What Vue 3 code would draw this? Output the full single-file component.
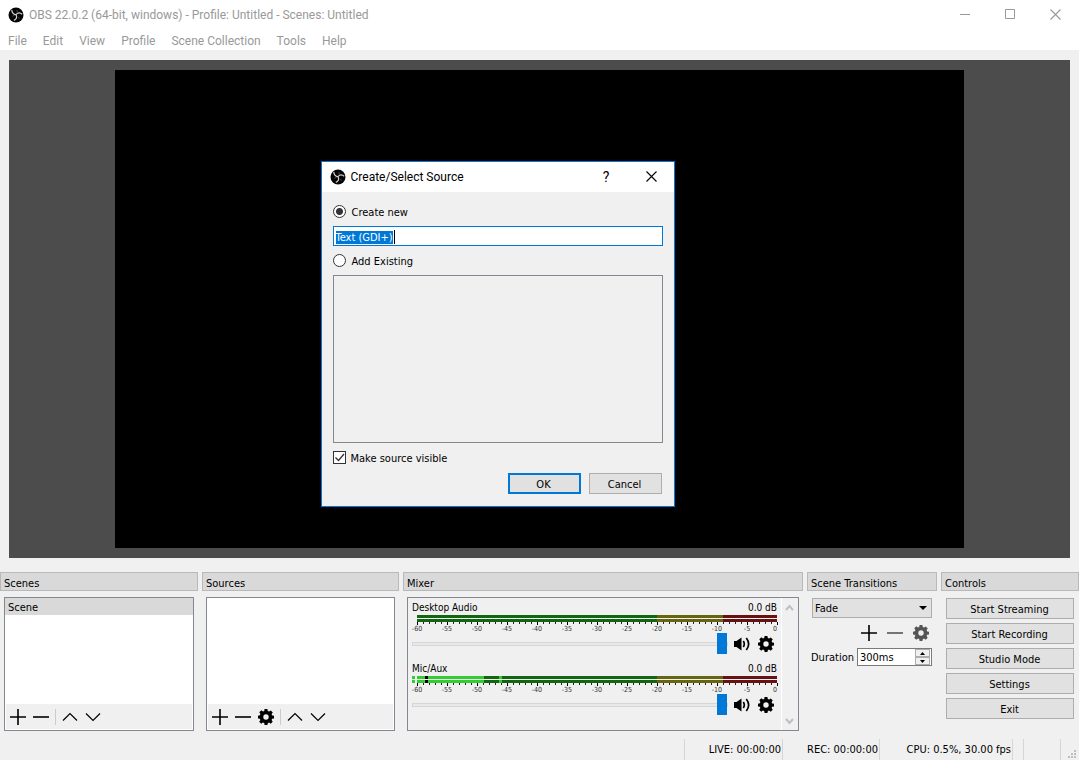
<script setup>
import { ref, onMounted } from 'vue'

const sourceName = ref('Text (GDI+)')
const mode = ref('new')
const visible = ref(true)
const duration = ref('300ms')
const nameBox = ref(null)

const menus = ['File', 'Edit', 'View', 'Profile', 'Scene Collection', 'Tools', 'Help']
const actions = ['Start Streaming', 'Start Recording', 'Studio Mode', 'Settings', 'Exit']
const channels = [
  { name: 'Desktop Audio', level: 0 },
  { name: 'Mic/Aux', level: 1 }
]
const ticks = Array.from({ length: 61 }, (_, i) => ({
  x: (i / 60) * 100 + '%',
  major: i % 5 === 0,
  label: String(i - 60)
}))
const gear = 'M6.600 0h2.800l.4 2 1.300.5 1.700-1.100 2 2-1.200 1.700.6 1.300 1.800.3v2.700l-1.900.4-.5 1.300 1.100 1.700-2 2-1.700-1.200-1.200.6-.4 1.800H6.600l-.4-1.900-1.300-.5-1.700 1.100-2-2 1.200-1.700-.6-1.200L0 9.400V6.700l1.900-.4.5-1.300-1.100-1.700 2-2L5 2.500 6.200 2zM8 5.300a2.700 2.700 0 1 0 0 5.400 2.700 2.700 0 0 0 0-5.400z'

onMounted(() => {
  nameBox.value.focus()
  nameBox.value.select()
})
</script>

<template>
  <div class="window">
    <svg class="defs" width="0" height="0" aria-hidden="true">
      <symbol id="obs" viewBox="0 0 16 16">
        <circle cx="8" cy="8" r="7.500" fill="#050505" />
        <path d="M3.800 2.900C3.900 5.600 5.600 7.200 8 7.600C9.800 5.600 12 5.400 14.200 7.300M8 7.600C9.300 10 8.600 12.300 5.800 13.400" fill="none" stroke="#d4d4d4" stroke-width="1.200" />
        <path d="M8.600 3.200C9.400 4 9.500 4.800 9.200 5.600M4.400 9.300C5 8.700 5.700 8.400 6.500 8.500M11.600 11.200C10.800 11.100 10 10.700 9.600 10" fill="none" stroke="#777" stroke-width=".7" />
      </symbol>
      <symbol id="gear" viewBox="0 0 16 16"><path :d="gear" fill="currentColor" fill-rule="evenodd" /></symbol>
      <symbol id="plus" viewBox="0 0 16 16"><path d="M0 8H16M8 0V16" stroke="currentColor" stroke-width="1.600" /></symbol>
      <symbol id="minus" viewBox="0 0 16 16"><path d="M0 8H16" stroke="currentColor" stroke-width="1.600" /></symbol>
      <symbol id="up" viewBox="0 0 16 16"><path d="M1 11.500L8 4.500L15 11.500" fill="none" stroke="currentColor" stroke-width="1.200" /></symbol>
      <symbol id="down" viewBox="0 0 16 16"><path d="M1 4.500L8 11.500L15 4.500" fill="none" stroke="currentColor" stroke-width="1.200" /></symbol>
      <symbol id="close" viewBox="0 0 11 11"><path d="M.5 .5L10.500 10.500M10.500 .5L.5 10.500" stroke="currentColor" stroke-width="1.100" /></symbol>
      <symbol id="speaker" viewBox="0 0 16 16">
        <path d="M0 5H2.500L7.500 1.500V14.500L2.500 11H0z" fill="currentColor" />
        <path d="M9.300 5Q11.300 8 9.300 11M12.300 2Q17 8 12.300 14" fill="none" stroke="currentColor" stroke-width="1.700" />
      </symbol>
    </svg>

    <header class="titlebar">
      <svg class="logo"><use href="#obs" /></svg>
      <h1>OBS 22.0.2 (64-bit, windows) - Profile: Untitled - Scenes: Untitled</h1>
      <button class="caption" aria-label="Minimize"><svg width="11" height="11"><path d="M0 5.500H10" stroke="currentColor" /></svg></button>
      <button class="caption" aria-label="Maximize"><svg width="11" height="11"><path d="M.5 .5H9.500V9.500H.5z" fill="none" stroke="currentColor" /></svg></button>
      <button class="caption" aria-label="Close"><svg width="11" height="11"><use href="#close" /></svg></button>
    </header>
    <nav class="menubar">
      <button v-for="m in menus" :key="m">{{ m }}</button>
    </nav>

    <main class="preview">
      <div class="canvas"></div>
      <form class="dialog" role="dialog" aria-labelledby="dialog-title" @submit.prevent>
        <div class="dialog-title">
          <svg class="logo"><use href="#obs" /></svg>
          <h2 id="dialog-title">Create/Select Source</h2>
          <button type="button" class="caption help" aria-label="Help">?</button>
          <button type="button" class="caption" aria-label="Close"><svg width="11" height="11"><use href="#close" /></svg></button>
        </div>
        <div class="dialog-body">
          <label class="choice"><input v-model="mode" type="radio" name="mode" value="new" /><span>Create new</span></label>
          <input ref="nameBox" v-model="sourceName" class="name" type="text" aria-label="Source name" />
          <label class="choice"><input v-model="mode" type="radio" name="mode" value="existing" /><span>Add Existing</span></label>
          <ul class="existing" aria-label="Existing sources"></ul>
          <label class="choice check"><input v-model="visible" type="checkbox" /><span>Make source visible</span><svg v-if="visible" class="tick" width="13" height="13"><path d="M2.500 6.500L5.500 9.500L11 3" fill="none" stroke="#333" stroke-width="1.300" /></svg></label>
          <div class="buttons">
            <button class="push default">OK</button>
            <button type="button" class="push">Cancel</button>
          </div>
        </div>
      </form>
    </main>

    <div class="docks">
      <section class="dock">
        <h3>Scenes</h3>
        <div class="panel list">
          <ul><li>Scene</li></ul>
          <div class="tools">
            <button aria-label="Add scene"><svg><use href="#plus" /></svg></button>
            <button aria-label="Remove scene"><svg><use href="#minus" /></svg></button>
            <i></i>
            <button aria-label="Move scene up"><svg><use href="#up" /></svg></button>
            <button aria-label="Move scene down"><svg><use href="#down" /></svg></button>
          </div>
        </div>
      </section>

      <section class="dock">
        <h3>Sources</h3>
        <div class="panel list">
          <ul></ul>
          <div class="tools">
            <button aria-label="Add source"><svg><use href="#plus" /></svg></button>
            <button aria-label="Remove source"><svg><use href="#minus" /></svg></button>
            <button aria-label="Source properties"><svg><use href="#gear" /></svg></button>
            <i></i>
            <button aria-label="Move source up"><svg><use href="#up" /></svg></button>
            <button aria-label="Move source down"><svg><use href="#down" /></svg></button>
          </div>
        </div>
      </section>

      <section class="dock">
        <h3>Mixer</h3>
        <div class="panel mixer">
          <div class="channels">
            <div v-for="c in channels" :key="c.name" class="channel">
              <div class="channel-head"><span>{{ c.name }}</span><span>0.0 dB</span></div>
              <div class="meter" :class="{ active: c.level }">
                <div class="bar"></div>
                <div class="bar"></div>
                <svg class="scale">
                  <template v-for="t in ticks" :key="t.label">
                    <rect :x="t.x" y="0" width="1" :height="t.major ? 3 : 2" :fill="t.major ? '#000' : '#222'" />
                    <text v-if="t.major" :x="t.x" y="9" :text-anchor="t.label === '0' ? 'end' : 'middle'">{{ t.label }}</text>
                  </template>
                </svg>
              </div>
              <div class="channel-foot">
                <input type="range" min="0" max="100" value="100" :aria-label="c.name + ' volume'" />
                <button :aria-label="'Mute ' + c.name"><svg><use href="#speaker" /></svg></button>
                <button :aria-label="c.name + ' settings'"><svg><use href="#gear" /></svg></button>
              </div>
            </div>
          </div>
          <div class="scroll">
            <svg width="9" height="7"><path d="M1 6L4.500 2L8 6" /></svg>
            <svg width="9" height="7"><path d="M1 1L4.500 5L8 1" /></svg>
          </div>
        </div>
      </section>

      <section class="dock">
        <h3>Scene Transitions</h3>
        <div class="transitions">
          <div class="combo">
            <select aria-label="Transition"><option>Fade</option></select>
            <svg width="9" height="5"><path d="M0 0H8L4 4z" /></svg>
          </div>
          <div class="transition-tools">
            <button aria-label="Add transition"><svg><use href="#plus" /></svg></button>
            <button class="dim" aria-label="Remove transition"><svg><use href="#minus" /></svg></button>
            <button class="dim" aria-label="Transition properties"><svg><use href="#gear" /></svg></button>
          </div>
          <div class="duration">
            <label for="duration">Duration</label>
            <div class="spin">
              <input id="duration" v-model="duration" type="text" />
              <div class="steps">
                <button aria-label="Increase"><svg width="5" height="3"><path d="M0 3L2.500 0L5 3z" /></svg></button>
                <button aria-label="Decrease"><svg width="5" height="3"><path d="M0 0L2.500 3L5 0z" /></svg></button>
              </div>
            </div>
          </div>
        </div>
      </section>

      <section class="dock">
        <h3>Controls</h3>
        <div class="controls">
          <button v-for="a in actions" :key="a" class="push">{{ a }}</button>
        </div>
      </section>
    </div>

    <footer class="status">
      <span class="live">LIVE: 00:00:00</span>
      <span class="rec">REC: 00:00:00</span>
      <span class="cpu">CPU: 0.5%, 30.00 fps</span>
      <span class="blank"></span>
      <span class="blank wide"></span>
      <svg class="grip" width="9" height="9"><path d="M6 0h2v2h-2zM3 3h2v2h-2zM6 3h2v2h-2zM0 6h2v2h-2zM3 6h2v2h-2zM6 6h2v2h-2z" /></svg>
    </footer>
  </div>
</template>

<style>
body { background: #f0f0f0; }
</style>

<style scoped>
* { box-sizing: border-box; }
.window {
  display: flex;
  flex-direction: column;
  min-height: 100vh;
  background: #f0f0f0;
  color: #000;
  font: 11px/14px "DejaVu Sans Condensed", "DejaVu Sans", sans-serif;
}
.defs { position: absolute; }
h1, h2, h3, ul { margin: 0; padding: 0; font: inherit; list-style: none; }
button, input, select { font: inherit; color: inherit; margin: 0; padding: 0; border: 0; background: none; border-radius: 0; }
svg { display: block; }
.logo { width: 16px; height: 16px; }

.titlebar, .menubar, .dialog-title { font: 12px/16px Roboto, "Noto Sans", sans-serif; }
.titlebar { display: flex; align-items: center; height: 29px; padding: 0 1px 0 8px; background: #fff; color: #999; }
.titlebar h1 { flex: 1; margin-left: 5px; }
.caption { display: flex; align-items: center; justify-content: center; width: 45px; height: 28px; }
.menubar { display: flex; align-items: center; gap: 16px; height: 21px; padding: 2px 8px 0; background: #fff; color: #999; }

.preview { position: relative; flex: 1; display: flex; justify-content: center; margin: 10px 9px 14px; padding: 10px 0; background: #4c4c4c; }
.canvas { width: 80%; background: #000; }
.dialog { position: absolute; left: 50%; top: 101px; width: 354px; margin-left: -219px; border: 1px solid #0078d7; background: #f0f0f0; }
.dialog-title { display: flex; align-items: center; height: 30px; padding: 0 0 1px 8px; background: #fff; }
.dialog-title h2 { flex: 1; margin-left: 5px; padding-top: 1px; }
.dialog-title .help { font-size: 14px; }
.dialog-body { display: flex; flex-direction: column; padding: 12px 11px; }
.choice { display: flex; align-items: center; gap: 6px; height: 15px; }
.choice span { padding-top: 2px; }
.choice input { appearance: none; width: 13px; height: 13px; border: 1px solid #333; background: #fff; }
.choice input[type="radio"] { border-radius: 50%; }
.choice input[type="radio"]:checked { background: radial-gradient(circle, #333 3px, #fff 4px); }
.check { position: relative; gap: 5px; }
.tick { position: absolute; left: 0; top: 1px; }
.name { height: 20px; margin: 7px 0; padding: 2px 2px 0; border: 1px solid #0078d7; outline: 0; background: #fff linear-gradient(#000, #000) 60px 3px / 1px 14px no-repeat; }
.name::selection { background: #0078d7; color: #fff; }
.existing { height: 168px; margin: 7px 0; border: 1px solid #828790; }
.buttons { display: flex; justify-content: flex-end; gap: 8px; margin: 8px 1px 0 0; }
.push { height: 21px; padding: 2px 1px 0 0; border: 1px solid #adadad; background: #e1e1e1; text-align: center; }
.buttons .push { width: 73px; }
.push.default { border: 2px solid #0078d7; }

.docks { display: grid; grid-template-columns: 198fr 197fr 400fr 130fr 138fr; gap: 4px; }
.dock { display: flex; flex-direction: column; min-width: 0; }
.dock h3 { height: 19px; padding: 3px 3px 0; border: 1px solid #b9b9b9; background: #d9d9d9; line-height: 15px; }
.panel { height: 134px; margin: 6px 4px 0; border: 1px solid #828790; }
.list { display: flex; flex-direction: column; padding: 0 1px 1px; background: #fff; }
.list ul { flex: 1; }
.list li { height: 17px; margin: 0 -1px; padding: 2px 3px 0; background: #d9d9d9; line-height: 15px; }
.tools { display: flex; align-items: center; gap: 7px; height: 25px; padding-left: 4px; background: #f0f0f0; }
.tools svg, .channel-foot svg, .transition-tools svg { width: 16px; height: 16px; }
.tools i { width: 1px; height: 16px; margin: 0 -1px; background: #ccc; }

.mixer { display: flex; }
.channels { flex: 1; min-width: 0; padding: 3px 4px 0; }
.channel { height: 61px; }
.channel-head { display: flex; justify-content: space-between; height: 14px; font-size: 10px; line-height: 13px; }
.meter { padding-left: 5px; }
.bar { height: 3px; margin-bottom: 1px; background: linear-gradient(90deg, #126612 66.6%, #666612 66.6% 85%, #661212 85%); }
.active .bar { margin-left: -5px; background: linear-gradient(90deg, #33cc33 3px, #f0f0f0 3px 5px, #33cc33 5px 13px, #000 13px 16px, #33cc33 16px 72px, #126612 72px 87px, #33cc33 87px 90px, #126612 90px 67.1%, #666612 67.1% 85.200%, #661212 85.200%); }
.scale { width: 100%; height: 11px; margin-top: -1px; overflow: visible; font-size: 7px; fill: #333; }
.channel-foot { display: flex; align-items: center; height: 21px; }
.channel-foot input { appearance: none; flex: 1; min-width: 0; height: 21px; }
.channel-foot input::-webkit-slider-runnable-track { height: 4px; border: 1px solid #d6d6d6; background: #e7eaea; }
.channel-foot input::-webkit-slider-thumb { appearance: none; width: 10px; height: 21px; margin-top: -10px; background: #0078d7; }
.channel-foot button { margin-left: 6px; }
.channel-foot button + button { margin: 0 3px 0 8px; }
.scroll { display: flex; flex-direction: column; justify-content: space-between; align-items: center; width: 17px; padding: 6px 1px 5px 0; border-left: 1px solid #fff; }
.scroll path { fill: none; stroke: #bfbfbf; stroke-width: 2; }

.transitions { padding: 7px 5px 0; }
.combo { position: relative; }
.combo select { appearance: none; display: block; width: 100%; height: 20px; padding: 2px 0 0 2px; border: 1px solid #adadad; background: #e1e1e1; }
.combo svg { position: absolute; right: 4px; top: 8px; }
.transition-tools { display: flex; align-items: flex-start; justify-content: flex-end; gap: 10px; height: 30px; padding: 7px 3px 0 0; }
.dim { color: #555; }
.duration { display: flex; align-items: center; gap: 3px; }
.duration label { margin-left: -1px; padding-top: 2px; }
.spin { display: flex; flex: 1; min-width: 0; height: 18px; border: 1px solid #7a7a7a; background: #fff; }
.spin input { flex: 1; min-width: 0; width: 0; padding: 2px 0 0 2px; outline: 0; }
.steps { display: flex; flex-direction: column; width: 15px; margin-right: 1px; }
.steps button { display: flex; flex: 1; align-items: center; justify-content: center; border: 1px solid #adadad; background: #f0f0f0; }
.controls { display: flex; flex-direction: column; gap: 4px; padding: 7px 5px 0; }

.status { display: flex; align-items: center; justify-content: flex-end; height: 22px; margin-top: 7px; padding-right: 2px; }
.status span { height: 21px; border-right: 1px solid #d6d6d6; text-align: right; line-height: 21px; padding-right: 1px; }
.status .live { width: 99px; border-left: 1px solid #d6d6d6; }
.status .rec { width: 97px; }
.status .cpu { width: 133px; }
.status .blank { width: 11px; }
.status .wide { width: 37px; margin-right: 7px; }
.grip { align-self: flex-end; fill: #bfbfbf; margin-bottom: 1px; }
</style>
